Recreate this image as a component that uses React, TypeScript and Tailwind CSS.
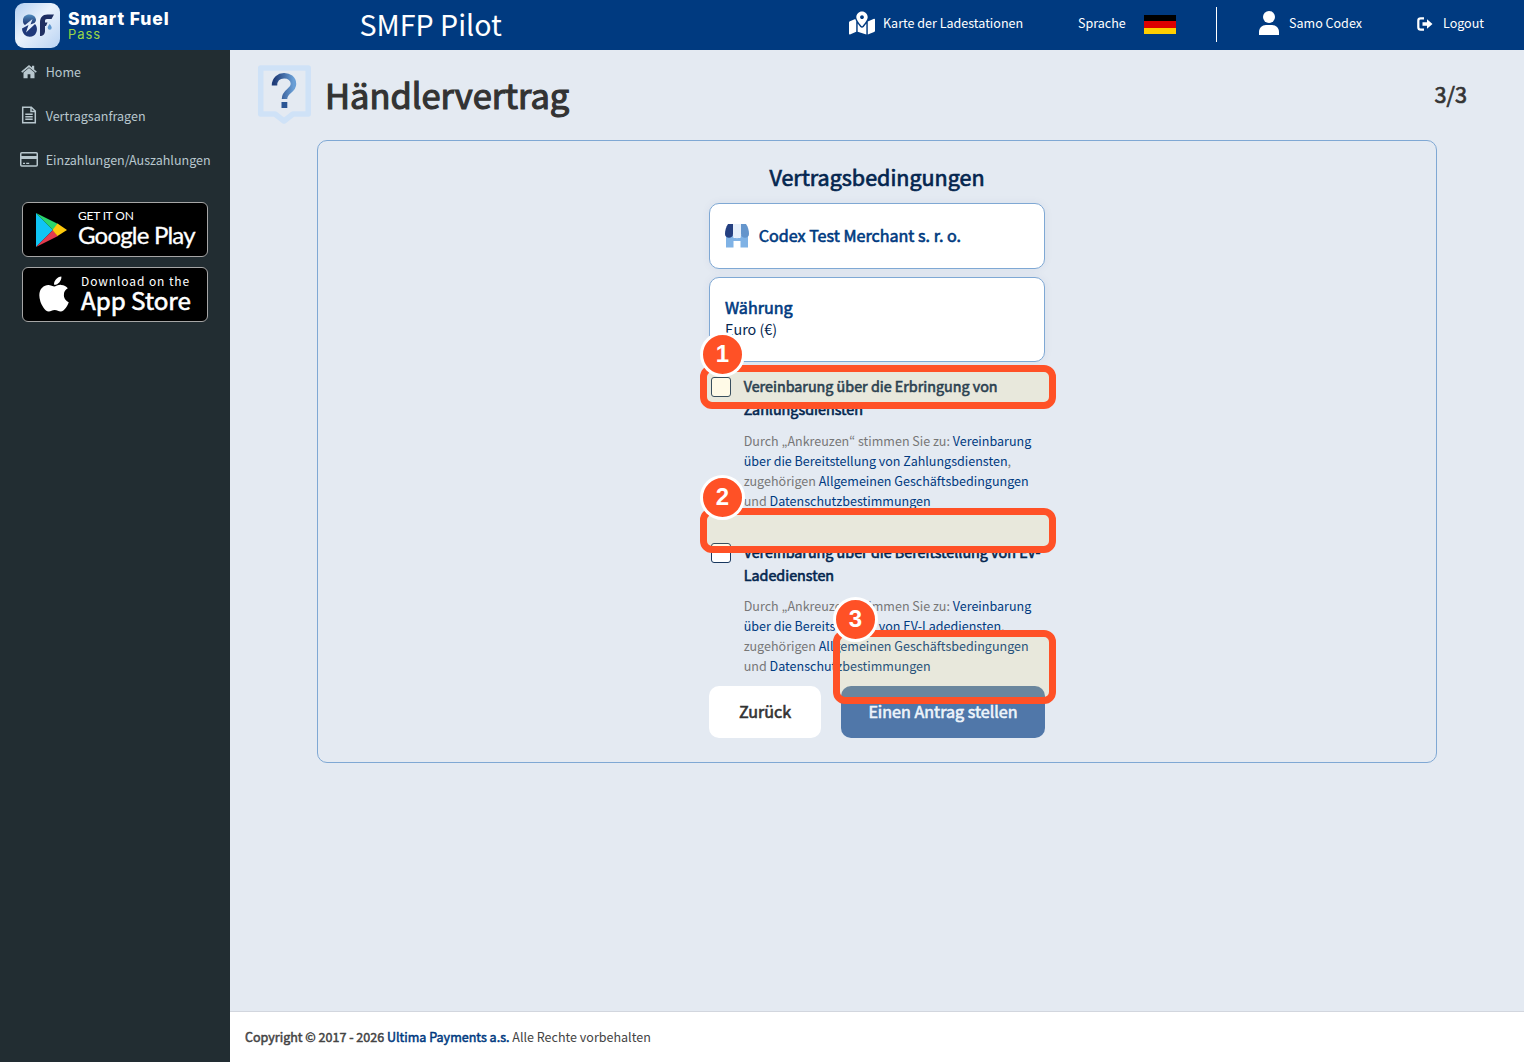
import type { ReactNode } from "react";
import { FaApple, FaMapMarkedAlt } from "react-icons/fa";

const nav = [
    {
        label: "Home",
        icon: (
            <svg className="-mt-px" width="16" height="14" viewBox="0 0 16 14" fill="currentColor">
                <path d="M8 0 .2 6.600l1 1.200L8 2.200l6.800 5.600 1-1.200L13.200 4.400V.8h-2.200v1.700z" />
                <path d="M2.500 7.500 8 3 13.500 7.500v5.700H9.400V9.300H6.600v3.900H2.500z" />
            </svg>
        ),
    },
    {
        label: "Vertragsanfragen",
        icon: (
            <svg className="-mt-0.5" width="16" height="18" viewBox="0 0 16 18" fill="none" stroke="currentColor" strokeWidth="1.500">
                <path d="M1.700 1.200h8.600L14.300 5v11.800H1.700z M10 1.200V5.500h4.300" />
                <path d="M4.300 8.200h7.400M4.300 10.700h7.400M4.300 13.200h7.400" />
            </svg>
        ),
    },
    {
        label: "Einzahlungen/Auszahlungen",
        icon: (
            <svg className="-mt-px" width="18" height="15" viewBox="0 0 18 15" fill="none" stroke="currentColor" strokeWidth="1.500">
                <rect x="0.750" y="0.750" width="16.500" height="13.200" rx="1" />
                <path d="M1 5.500h16" strokeWidth="3" />
                <path d="M3 11.300h2M6.200 11.300h3" strokeWidth="1.200" />
            </svg>
        ),
    },
];

function Logo() {
    return (
        <svg width="45" height="45" viewBox="0 0 45 45">
            <defs>
                <linearGradient id="tile" x1="0" y1="0" x2="1" y2="1">
                    <stop offset="0" stopColor="#b3cff0" />
                    <stop offset="0.45" stopColor="#eaf2fc" />
                    <stop offset="1" stopColor="#b9d3f3" />
                </linearGradient>
                <linearGradient id="ess" x1="0" y1="0" x2="0" y2="1">
                    <stop offset="0" stopColor="#4f8bbd" />
                    <stop offset="1" stopColor="#1c2f6c" />
                </linearGradient>
            </defs>
            <rect width="45" height="45" rx="9" fill="url(#tile)" />
            {/* figure-eight S, cut by a lightning bolt */}
            <path
                d="M20.500 15C19 10.500 9 10 8 16.500c-.4 3 .5 4.500 2 5.500l7.500-6-2 5.500 4-1.500c1.500-1.500 2-3 1-5z"
                fill="url(#ess)"
            />
            <path d="M7 25.500 13.500 22 11 29.500 20 21c3 3 2.500 9-1 11.500-5 3-11.500.5-12-7z" fill="#20397a" />
            <path d="M39 11.500 36.500 16H32c-1.500 0-2 .7-2 2.500V28c0 3-2 5-5 5V19.500c0-5 2.500-8 7.500-8z" fill="#1f2f62" />
            <path d="M29 19.500h3.500L31 23h-2z" fill="#1f2f62" />
            <path d="M34.700 21c1.100 1.600 2 2.700 2 3.800a2 2 0 0 1-4 0c0-1.100.9-2.200 2-3.800z" fill="#5f97cf" />
        </svg>
    );
}

function HelpIcon() {
    return (
        <svg width="54" height="60" viewBox="0 0 54 60" fill="none">
            <defs>
                <linearGradient id="help" x1="0" y1="0" x2="1" y2="0">
                    <stop offset="0" stopColor="#1f3c78" />
                    <stop offset="1" stopColor="#6a9fd6" />
                </linearGradient>
            </defs>
            <path d="M3.700 3h47.500v46H36l-9 7-9-7H3.700z" stroke="#cfe2f7" strokeWidth="5.500" strokeLinejoin="round" />
            <path d="M17.500 20.500C17.500 7.500 36.500 8 36.500 19c0 7-9 7-9 15" stroke="url(#help)" strokeWidth="5.500" />
            <path d="M24.500 37h5.800v6h-5.800z" fill="#2a5594" />
        </svg>
    );
}

function MerchantIcon() {
    return (
        <svg width="24" height="24" viewBox="0 0 24 24">
            <path d="M1 11h7.500v3h7v-3H23v12.500h-7.500V17h-7v6.500H1z" fill="#7fb2e5" />
            <path d="M8 0h8v12c-1 3-7 3-8 0z" fill="#e6effa" />
            <path d="M3 0h5v10c0 5-8 5-8 0C0 6 1 3 3 0z" fill="#243f80" />
            <path d="M16 0h5c2 3 3 6 3 10 0 5-8 5-8 0z" fill="#6495cc" />
        </svg>
    );
}

function PlayIcon() {
    return (
        <svg width="33" height="36" viewBox="0 0 33 36">
            <path d="M1 1v34l17-17z" fill="#10c4f4" />
            <path d="M1 1l17 17 5-6z" fill="#2bd66c" />
            <path d="M1 35l17-17 5 6z" fill="#e33b4e" />
            <path d="M22.500 11.500L32 18l-9.500 6-5-6z" fill="#fdc90c" />
        </svg>
    );
}

function Consent({ title, children }: { title: string; children: ReactNode }) {
    return (
        <div className="flex">
            <div className="ml-0.5 mt-[3px] h-5 w-5 shrink-0 rounded-[3px] border border-[#17375e] bg-white" />
            <div className="ml-[12.700px]">
                <div className="w-[302px] text-[14.340px] leading-[23px] text-[#04264f] [-webkit-text-stroke:0.6px]">
                    {title}
                </div>
                <p className="mt-[10.700px] w-[300px] text-[12.540px] leading-5 text-[#777]">{children}</p>
            </div>
        </div>
    );
}

function Term({ children }: { children: ReactNode }) {
    return <a className="text-[#003a80]">{children}</a>;
}

// Numbered highlight drawn over the form
function Marker({ n, className }: { n: number; className: string }) {
    return (
        <div className={`absolute rounded-[12px] border-[7px] border-[#ff5126] bg-[rgba(255,222,95,0.15)] ${className}`}>
            <div className="absolute -left-[7px] -top-[40px] flex h-[45px] w-[45px] items-center justify-center rounded-full border-[3px] border-white bg-[#ff5126] pb-px font-['Liberation_Sans',sans-serif] text-[24px] font-bold leading-none text-white">
                {n}
            </div>
        </div>
    );
}

export default function App() {
    return (
        <div className="flex h-[1062px] w-[1524px] flex-col overflow-hidden bg-[#e4eaf2] font-['Noto_Sans_CJK_JP',sans-serif] text-[12.540px] leading-5 text-[#333]">
            <header className="flex h-[50px] shrink-0 bg-[#003a80] text-white">
                <div className="flex w-[359.500px] pl-[15px] pt-[3px]">
                    <Logo />
                    <div className="ml-2 mt-2 font-['Inter',sans-serif]">
                        <div className="text-[17.500px] font-extrabold leading-4 tracking-[0.900px]">Smart Fuel</div>
                        <div className="text-[13px] leading-[14px] tracking-[0.900px] text-[#9bd746]">Pass</div>
                    </div>
                </div>
                <div className="w-[489.500px] text-[28.600px] leading-[48px]">SMFP Pilot</div>
                <div className="flex h-[47px] items-center">
                    <FaMapMarkedAlt size={26} className="-mt-px" />
                    <span className="-mt-0.5 ml-2 w-[195px]">Karte der Ladestationen</span>
                    <span className="-mt-0.5 w-[66px]">Sprache</span>
                    <div className="mt-0.5 h-[19px] w-8">
                        <div className="h-[6px] bg-black" />
                        <div className="h-[7px] bg-[#dd0000]" />
                        <div className="h-[6px] bg-[#ffce00]" />
                    </div>
                    <div className="ml-10 mt-0.5 h-[35px] w-px bg-white" />
                    <svg className="-mt-0.5 ml-[42px]" width="20" height="24" viewBox="0 0 20 24" fill="currentColor">
                        <circle cx="10" cy="6" r="6" />
                        <path d="M0 24v-3c0-4 3-7 7-7h6c4 0 7 3 7 7v3z" />
                    </svg>
                    <span className="-mt-0.5 ml-2.5 w-[128px]">Samo Codex</span>
                    <svg className="mt-px" width="16" height="14" viewBox="0 0 16 14">
                        <path d="M7 1.300H3.700C2 1.300 1.300 2 1.300 3.700v6.600c0 1.700.7 2.400 2.400 2.400H7" fill="none" stroke="#fff" strokeWidth="2.200" />
                        <path d="M5.500 5.300h4.500V2.300L15.500 7 10 11.700v-3H5.500z" fill="#fff" />
                    </svg>
                    <span className="-mt-0.5 ml-2.5">Logout</span>
                </div>
            </header>

            <div className="flex flex-1">
                <aside className="w-[230px] shrink-0 bg-[#222d32] text-[#b8c7ce]">
                    <nav>
                        {nav.map((item) => (
                            <div key={item.label} className="flex h-11 items-center pl-5">
                                <span className="flex w-[18px] justify-center">{item.icon}</span>
                                <span className="ml-[7.700px]">{item.label}</span>
                            </div>
                        ))}
                    </nav>
                    <div className="ml-[22px] mt-5 flex h-[55px] w-[186px] items-center rounded-md border border-[#a6a6a6] bg-black pl-3 text-white">
                        <PlayIcon />
                        <div className="-mt-0.5 ml-[10px] font-['Lato',sans-serif]">
                            <div className="text-[12px] leading-3 tracking-[-0.200px]">GET IT ON</div>
                            <div className="text-[24px] leading-[26px] tracking-[-0.800px] [-webkit-text-stroke:0.3px]">Google Play</div>
                        </div>
                    </div>
                    <div className="ml-[22px] mt-2.5 flex h-[55px] w-[186px] items-center rounded-md border border-[#a6a6a6] bg-black pl-[11px] text-white">
                        <FaApple size={40} className="-mt-0.5" />
                        <div className="-mt-0.5 ml-[7px]">
                            <div className="text-[12px] leading-3 tracking-[0.900px]">Download on the</div>
                            <div className="text-[24.200px] leading-[26px] [-webkit-text-stroke:0.6px]">App Store</div>
                        </div>
                    </div>
                </aside>

                <div className="flex flex-1 flex-col">
                    <main className="flex-1">
                        <div className="flex h-[90px] pl-[27px] pt-[15px]">
                            <HelpIcon />
                            <h1 className="ml-[14px] flex-1 text-[34.400px] leading-[59px] [-webkit-text-stroke:1.200px]">Händlervertrag</h1>
                            <div className="mr-[57px] text-[21.600px] leading-[58px] [-webkit-text-stroke:0.7px]">3/3</div>
                        </div>

                        <section className="relative ml-[87px] h-[623px] w-[1120px] rounded-[10px] border border-[#7fa8d4]">
                            <div className="mx-auto w-[336px] pt-5">
                                <h2 className="text-center text-[21.500px] leading-[31px] text-[#04264f] [-webkit-text-stroke:0.7px]">
                                    Vertragsbedingungen
                                </h2>
                                <div className="mt-[11px] flex h-[66px] items-center rounded-[10px] border border-[#7fa8d4] bg-white pl-[15px] text-[16.120px] text-[#003a80] shadow-[0_0_10px_rgba(0,57,127,0.06)] [-webkit-text-stroke:0.6px]">
                                    <MerchantIcon />
                                    <span className="-mt-0.5 ml-[9.700px]">Codex Test Merchant s. r. o.</span>
                                </div>
                                <div className="mt-2 h-[85px] rounded-[10px] border border-[#7fa8d4] bg-white pl-[15px] pt-[19px] shadow-[0_0_10px_rgba(0,57,127,0.06)]">
                                    <div className="text-[16.120px] leading-[21px] text-[#003a80] [-webkit-text-stroke:0.6px]">Währung</div>
                                    <div className="text-[14.340px] leading-[22px] text-[#04264f]">Euro (€)</div>
                                </div>

                                <div className="mt-3">
                                    <Consent title="Vereinbarung über die Erbringung von Zahlungsdiensten">
                                        Durch „Ankreuzen“ stimmen Sie zu: <Term>Vereinbarung über die Bereitstellung von Zahlungsdiensten</Term>,
                                        zugehörigen <Term>Allgemeinen Geschäftsbedingungen</Term> und <Term>Datenschutzbestimmungen</Term>
                                    </Consent>
                                </div>
                                <div className="mt-[29px]">
                                    <Consent title="Vereinbarung über die Bereitstellung von EV-Ladediensten">
                                        Durch „Ankreuzen“ stimmen Sie zu: <Term>Vereinbarung über die Bereitstellung von EV-Ladediensten</Term>,
                                        zugehörigen <Term>Allgemeinen Geschäftsbedingungen</Term> und <Term>Datenschutzbestimmungen</Term>
                                    </Consent>
                                </div>

                                <div className="mt-[9.600px] flex justify-between text-[16.120px] [-webkit-text-stroke:0.6px]">
                                    <button className="h-[52px] w-[112px] rounded-[10px] bg-white pb-0.5">Zurück</button>
                                    <button className="h-[52px] w-[204px] rounded-[10px] bg-[#5077a9] pb-0.5 text-[#eef4fb]">Einen Antrag stellen</button>
                                </div>
                            </div>

                            <Marker n={1} className="left-[382px] top-[224px] h-[44px] w-[356px]" />
                            <Marker n={2} className="left-[382px] top-[367px] h-[45px] w-[356px]" />
                            <Marker n={3} className="left-[515px] top-[489px] h-[74px] w-[223px]" />
                        </section>
                    </main>

                    <footer className="h-[51px] border-t border-[#d2d6de] bg-white pl-[15px] pt-[15px] text-[#444]">
                        <span className="[-webkit-text-stroke:0.5px]">
                            Copyright © 2017 - 2026 <span className="text-[#003a80]">Ultima Payments a.s.</span>
                        </span>{" "}
                        Alle Rechte vorbehalten
                    </footer>
                </div>
            </div>
        </div>
    );
}
